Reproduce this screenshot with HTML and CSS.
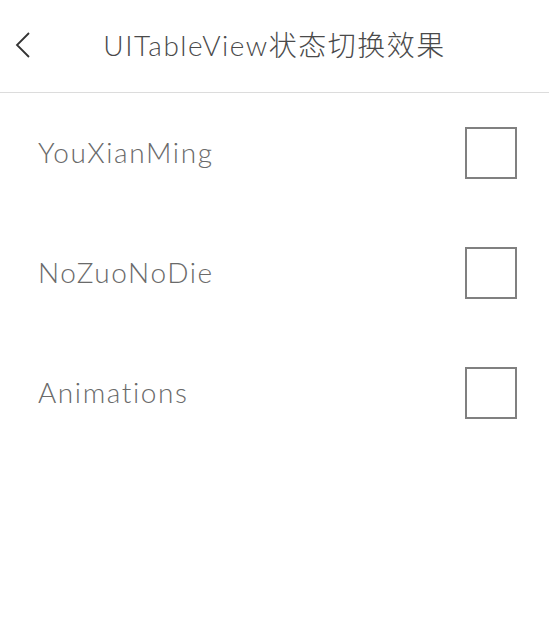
FILE: index.html
```html
<!DOCTYPE html>
<html lang="zh">
<head>
  <meta charset="UTF-8" />
  <meta name="viewport" content="width=device-width, initial-scale=1.0" />
  <title>UITableView状态切换效果</title>
  <link rel="stylesheet" href="styles.css">
</head>
<body>
  <div class="nav">
    <svg class="back" width="16" height="28" viewBox="0 0 16 28">
      <path d="M14 2 L2 14 L14 26" fill="none" stroke="#333" stroke-width="1.8" />
    </svg>
    <h1>UITableView状态切换效果</h1>
  </div>
  <ul class="list">
    <li class="row"><span>YouXianMing</span><i class="box"></i></li>
    <li class="row"><span>NoZuoNoDie</span><i class="box"></i></li>
    <li class="row"><span>Animations</span><i class="box"></i></li>
  </ul>
</body>
</html>
```

FILE: styles.css
```css
*, *::before, *::after { box-sizing: border-box; }
html, body { margin: 0; padding: 0; }
body {
  font-family: Lato, "Noto Sans CJK SC", sans-serif;
  background-color: #fff;
  width: 549px;
  height: 630px;
  overflow: hidden;
}
.nav {
  position: relative;
  height: 93px;
  display: flex;
  align-items: center;
  justify-content: center;
  border-bottom: 1px solid #dcdcdc;
}
.back { position: absolute; left: 15px; top: 31px; }
.nav h1 {
  margin: 0 0 4px;
  font-size: 28px;
  font-weight: 300;
  letter-spacing: 1.5px;
  color: #4a4a4a;
}
.list { list-style: none; margin: 0; padding: 0; }
.row {
  height: 120px;
  display: flex;
  align-items: center;
  justify-content: space-between;
  padding: 0 32px 0 38px;
  font-size: 28px;
  font-weight: 300;
  letter-spacing: 1.6px;
  color: #6a6a6a;
}
.row span { margin-top: -3px; }
.box {
  width: 52px;
  height: 52px;
  border: 2px solid #808080;
}
```
